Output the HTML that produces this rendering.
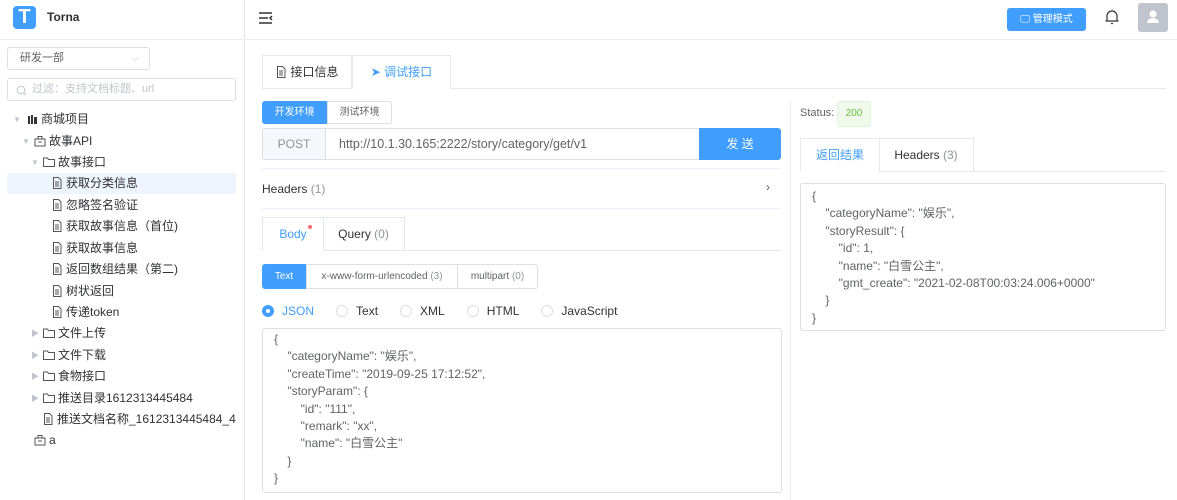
<!DOCTYPE html>
<html><head><meta charset="utf-8"><style>
*{box-sizing:border-box;margin:0;padding:0}
body{width:1177px;height:500px;overflow:hidden;background:#fff;font-family:"Liberation Sans","Noto Sans CJK SC",sans-serif;color:#303133;font-size:12px;position:relative}
.abs{position:absolute}
.side{left:0;top:0;width:245px;height:500px;border-right:1px solid #e6e6e6}
.logo{left:13px;top:6px;width:23px;height:23px;background:#409eff;border-radius:4px;color:#fff;font-weight:bold;font-size:20px;text-align:center;line-height:23px}
.hline{left:0;top:39px;width:1177px;height:1px;background:#ececec}
.sel{left:7px;top:47px;width:143px;height:23px;border:1px solid #dcdfe6;border-radius:3px;padding-left:12px;line-height:21px;color:#606266;font-size:11px}
.filter{left:7px;top:78px;width:229px;height:23px;border:1px solid #dcdfe6;border-radius:3px;padding-left:24px;line-height:21px;color:#c0c4cc;font-size:11px}
.row{left:7px;width:229px;height:21px;line-height:21px;font-size:12px;color:#303133}
.row .t{position:absolute;top:0;white-space:nowrap}
.row svg{vertical-align:-2px;margin-right:3px}
.arr{position:absolute;top:0;color:#c0c4cc;font-size:8px}
.btn{background:#409eff;color:#fff;border-radius:3px}
.tab{border:1px solid #e4e7ed;height:34px;line-height:33px;text-align:center;font-size:12px}
.code{font-size:12px;line-height:17.4px;color:#606266;white-space:pre}
.radio{width:12px;height:12px;border:1px solid #dcdfe6;border-radius:50%;display:inline-block}
</style></head><body>
<svg width="0" height="0" style="position:absolute"><defs>
<symbol id="doc" viewBox="0 0 12 12"><path d="M2.5 0.5h5l2.5 2.5v8.5h-7.5z M4 5h4M4 7h4M4 9h4" stroke="#555" fill="none"/></symbol>
<symbol id="fold" viewBox="0 0 12 12"><path d="M0.5 2h4l1 1.5h6v7h-11z" stroke="#555" fill="none"/></symbol>
<symbol id="box" viewBox="0 0 12 12"><path d="M1 4h10v7H1z M4 4V1.5h4V4 M4 7h4" stroke="#555" fill="none"/></symbol>
</defs></svg>
<div class="abs side"></div>
<div class="abs logo">T</div>
<div class="abs" style="left:47px;top:10px;font-weight:bold;font-size:12px">Torna</div>
<div class="abs hline"></div>
<svg class="abs" style="left:259px;top:12px" width="14" height="12" viewBox="0 0 14 12"><path d="M0 1h13M0 6h9M0 11h13M13 4l-2 2 2 2" stroke="#333" stroke-width="1.5" fill="none"/></svg>
<div class="abs btn" style="left:1007px;top:8px;width:79px;height:23px;line-height:23px;text-align:center;font-size:10px">🖵 管理模式</div>
<svg class="abs" style="left:1105px;top:10px" width="14" height="15" viewBox="0 0 14 15"><path d="M2 11V6a5 5 0 0 1 10 0v5h1.5H0.5M6 13.5h2" stroke="#333" stroke-width="1.2" fill="none"/></svg>
<div class="abs" style="left:1138px;top:3px;width:30px;height:29px;background:#c0c4cc;border-radius:3px"><svg width="30" height="29"><circle cx="15" cy="11" r="3.5" fill="#fff"/><path d="M9 20a6 5 0 0 1 12 0z" fill="#fff"/></svg></div>

<div class="abs sel">研发一部<span style="position:absolute;right:10px;top:0;color:#c0c4cc;font-size:10px">⌵</span></div>
<div class="abs filter"><svg style="position:absolute;left:8px;top:6px" width="11" height="11"><circle cx="5" cy="5" r="3.8" stroke="#c0c4cc" fill="none"/><path d="M8 8l2 2" stroke="#c0c4cc"/></svg>过滤：支持文档标题、url</div>

<div class="abs row" style="top:109px"><span class="arr" style="left:6px">▼</span><span class="t" style="left:20px"><svg width="11" height="11" viewBox="0 0 11 11"><path d="M1 2h2v8H1zM4 1h2v9H4zM7 3h3v7H7z" fill="#333"/></svg>商城项目</span></div>
<div class="abs row" style="top:131px"><span class="arr" style="left:15px">▼</span><span class="t" style="left:27px"><svg width="12" height="12"><use href="#box"/></svg>故事API</span></div>
<div class="abs row" style="top:152px"><span class="arr" style="left:24px">▼</span><span class="t" style="left:36px"><svg width="12" height="12"><use href="#fold"/></svg>故事接口</span></div>
<div class="abs row" style="top:173px;background:#eef5fe"><span class="t" style="left:44px"><svg width="12" height="12"><use href="#doc"/></svg>获取分类信息</span></div>
<div class="abs row" style="top:195px"><span class="t" style="left:44px"><svg width="12" height="12"><use href="#doc"/></svg>忽略签名验证</span></div>
<div class="abs row" style="top:216px"><span class="t" style="left:44px"><svg width="12" height="12"><use href="#doc"/></svg>获取故事信息（首位)</span></div>
<div class="abs row" style="top:238px"><span class="t" style="left:44px"><svg width="12" height="12"><use href="#doc"/></svg>获取故事信息</span></div>
<div class="abs row" style="top:259px"><span class="t" style="left:44px"><svg width="12" height="12"><use href="#doc"/></svg>返回数组结果（第二)</span></div>
<div class="abs row" style="top:281px"><span class="t" style="left:44px"><svg width="12" height="12"><use href="#doc"/></svg>树状返回</span></div>
<div class="abs row" style="top:302px"><span class="t" style="left:44px"><svg width="12" height="12"><use href="#doc"/></svg>传递token</span></div>
<div class="abs row" style="top:323px"><span class="arr" style="left:24px">▶</span><span class="t" style="left:36px"><svg width="12" height="12"><use href="#fold"/></svg>文件上传</span></div>
<div class="abs row" style="top:345px"><span class="arr" style="left:24px">▶</span><span class="t" style="left:36px"><svg width="12" height="12"><use href="#fold"/></svg>文件下载</span></div>
<div class="abs row" style="top:366px"><span class="arr" style="left:24px">▶</span><span class="t" style="left:36px"><svg width="12" height="12"><use href="#fold"/></svg>食物接口</span></div>
<div class="abs row" style="top:388px"><span class="arr" style="left:24px">▶</span><span class="t" style="left:36px"><svg width="12" height="12"><use href="#fold"/></svg>推送目录1612313445484</span></div>
<div class="abs row" style="top:409px"><span class="t" style="left:35px"><svg width="12" height="12"><use href="#doc"/></svg>推送文档名称_1612313445484_4</span></div>
<div class="abs row" style="top:430px"><span class="t" style="left:27px"><svg width="12" height="12"><use href="#box"/></svg>a</span></div>

<div class="abs" style="left:262px;top:88px;width:904px;height:1px;background:#e4e7ed"></div>
<div class="abs tab" style="left:262px;top:55px;width:90px;height:34px"><svg width="12" height="12" style="vertical-align:-2px;margin-right:3px"><use href="#doc"/></svg>接口信息</div>
<div class="abs tab" style="left:352px;top:55px;width:99px;height:34px;border-bottom-color:#fff;color:#409eff">➤ 调试接口</div>

<div class="abs btn" style="left:262px;top:101px;width:65px;height:23px;line-height:23px;text-align:center;font-size:10px;border-radius:3px 0 0 3px">开发环境</div>
<div class="abs" style="left:327px;top:101px;width:65px;height:23px;line-height:21px;text-align:center;font-size:10px;border:1px solid #dcdfe6;border-radius:0 3px 3px 0;color:#606266">测试环境</div>

<div class="abs" style="left:262px;top:128px;width:438px;height:32px;border:1px solid #dcdfe6;border-radius:3px 0 0 3px"></div>
<div class="abs" style="left:263px;top:129px;width:63px;height:30px;background:#f5f7fa;border-right:1px solid #dcdfe6;line-height:30px;text-align:center;color:#909399;font-size:12px">POST</div>
<div class="abs" style="left:339px;top:129px;line-height:30px;color:#606266;font-size:12.5px">http://10.1.30.165:2222/story/category/get/v1</div>
<div class="abs btn" style="left:699px;top:128px;width:82px;height:32px;line-height:32px;text-align:center;border-radius:0 3px 3px 0;font-size:12px">发 送</div>

<div class="abs" style="left:262px;top:168px;width:519px;height:1px;background:#ebeef5"></div>
<div class="abs" style="left:262px;top:182px;font-size:12px">Headers <span style="color:#909399">(1)</span></div>
<div class="abs" style="left:766px;top:180px;color:#606266">›</div>
<div class="abs" style="left:262px;top:208px;width:519px;height:1px;background:#ebeef5"></div>

<div class="abs" style="left:262px;top:250px;width:519px;height:1px;background:#e4e7ed"></div>
<div class="abs tab" style="left:262px;top:217px;width:62px;border-bottom-color:#fff;color:#409eff">Body<span style="position:absolute;left:45px;top:7px;width:4px;height:4px;border-radius:50%;background:#f56c6c"></span></div>
<div class="abs tab" style="left:323px;top:217px;width:82px;border-left:none">Query <span style="color:#909399">(0)</span></div>

<div class="abs btn" style="left:262px;top:264px;width:44px;height:25px;line-height:25px;text-align:center;font-size:10px;border-radius:3px 0 0 3px">Text</div>
<div class="abs" style="left:306px;top:264px;width:152px;height:25px;line-height:23px;text-align:center;font-size:10px;border:1px solid #dcdfe6;color:#606266">x-www-form-urlencoded <span style="color:#909399">(3)</span></div>
<div class="abs" style="left:457px;top:264px;width:81px;height:25px;line-height:23px;text-align:center;font-size:10px;border:1px solid #dcdfe6;border-radius:0 3px 3px 0;color:#606266">multipart <span style="color:#909399">(0)</span></div>

<div class="abs" style="left:262px;top:305px;font-size:12px;line-height:13px">
<span class="radio" style="border:4px solid #409eff;vertical-align:-2px"></span><span style="color:#409eff;margin:0 22px 0 8px">JSON</span><span class="radio" style="vertical-align:-2px"></span><span style="margin:0 22px 0 8px">Text</span><span class="radio" style="vertical-align:-2px"></span><span style="margin:0 22px 0 8px">XML</span><span class="radio" style="vertical-align:-2px"></span><span style="margin:0 22px 0 8px">HTML</span><span class="radio" style="vertical-align:-2px"></span><span style="margin:0 0 0 8px">JavaScript</span></div>

<div class="abs code" style="left:262px;top:328px;width:520px;height:165px;border:1px solid #dcdfe6;border-radius:3px;padding:2px 11px">{
    "categoryName": "娱乐",
    "createTime": "2019-09-25 17:12:52",
    "storyParam": {
        "id": "111",
        "remark": "xx",
        "name": "白雪公主"
    }
}</div>

<div class="abs" style="left:790px;top:100px;width:1px;height:400px;background:#ebeef5"></div>
<div class="abs" style="left:800px;top:107px;color:#606266;font-size:11px">Status:</div>
<div class="abs" style="left:837px;top:101px;width:34px;height:26px;background:#f0f9eb;border:1px solid #e1f3d8;border-radius:3px;color:#67c23a;font-size:10px;text-align:center;line-height:24px">200</div>
<div class="abs" style="left:800px;top:171px;width:366px;height:1px;background:#e4e7ed"></div>
<div class="abs tab" style="left:800px;top:138px;width:80px;border-bottom-color:#fff;color:#409eff">返回结果</div>
<div class="abs tab" style="left:879px;top:138px;width:95px;border-left:none">Headers <span style="color:#909399">(3)</span></div>
<div class="abs code" style="left:800px;top:183px;width:366px;height:148px;border:1px solid #dcdfe6;border-radius:3px;padding:4px 11px">{
    "categoryName": "娱乐",
    "storyResult": {
        "id": 1,
        "name": "白雪公主",
        "gmt_create": "2021-02-08T00:03:24.006+0000"
    }
}</div>
</body></html>
